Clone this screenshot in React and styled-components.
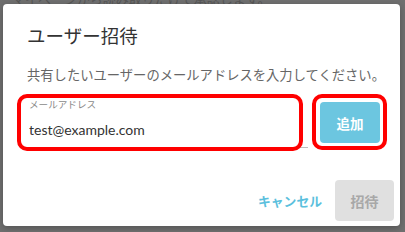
import React from "react";
import styled, { createGlobalStyle } from "styled-components";

const Global = createGlobalStyle`
  html, body { margin: 0; padding: 0; }
  body {
    width: 405px;
    height: 232px;
    overflow: hidden;
    background: #6f6f6f;
    font-family: "Lato", "Noto Sans CJK JP", sans-serif;
  }
`;

const Page = styled.div`
  position: relative;
  width: 405px;
  height: 232px;
  background: #6f6f6f;
  overflow: hidden;
`;

const BackText = styled.div`
  margin: -9px 0 0 12px;
  font-size: 13px;
  line-height: 16px;
  color: #565656;
  white-space: nowrap;
`;

const Dialog = styled.div`
  position: absolute;
  left: 3px;
  top: 4px;
  width: 397px;
  height: 222px;
  box-sizing: border-box;
  background: #fff;
  border-radius: 4px;
  box-shadow: 0 2px 6px rgba(0, 0, 0, 0.25);
  display: flex;
  flex-direction: column;
  padding: 20px 6px 5px 24px;
`;

const Title = styled.h2`
  margin: 0;
  font-size: 18.5px;
  line-height: 24px;
  font-weight: 400;
  color: #333;
`;

const Message = styled.p`
  margin: 17px 0 0;
  font-size: 13.3px;
  line-height: 20px;
  color: #666;
  white-space: nowrap;
`;

const FieldRow = styled.div`
  display: flex;
  align-items: flex-start;
  gap: 12px;
  margin-top: 11px;
  padding-right: 14px;
`;

const Annotated = styled.div`
  position: relative;
  display: flex;
  flex: ${(p) => (p.$grow ? 1 : "none")};
  &::after {
    content: "";
    position: absolute;
    left: ${(p) => p.$l}px;
    right: ${(p) => p.$r}px;
    top: ${(p) => p.$t}px;
    bottom: ${(p) => p.$b}px;
    border: 4px solid #ff0000;
    border-radius: 10px;
    pointer-events: none;
  }
`;

const Field = styled.label`
  flex: 1;
  display: flex;
  flex-direction: column;
  padding-left: 2px;
  border-bottom: 1px solid #bdbdbd;
`;

const FieldLabel = styled.span`
  font-size: 9.6px;
  line-height: 14px;
  color: #8a8a8a;
  margin-top: 2px;
`;

const Input = styled.input`
  border: none;
  outline: none;
  padding: 0;
  margin: 8px 0 7px;
  font-family: "Lato", "Noto Sans CJK JP", sans-serif;
  font-size: 14px;
  line-height: 20px;
  height: 20px;
  color: #333;
  background: transparent;
`;

const AddButton = styled.button`
  width: 60px;
  height: 41px;
  margin-top: 6px;
  border: none;
  border-radius: 4px;
  background: #6cc6e0;
  color: #fff;
  font-family: "Lato", "Noto Sans CJK JP", sans-serif;
  font-weight: 700;
  font-size: 13.5px;
`;

const Footer = styled.div`
  margin-top: auto;
  display: flex;
  justify-content: flex-end;
  align-items: center;
  gap: 5px;
`;

const TextButton = styled.button`
  border: none;
  background: transparent;
  padding: 0 8px;
  height: 41px;
  color: #5bbfdd;
  font-family: "Lato", "Noto Sans CJK JP", sans-serif;
  font-weight: 700;
  font-size: 12.8px;
`;

const DisabledButton = styled.button`
  width: 59px;
  height: 41px;
  border: none;
  border-radius: 4px;
  background: #e0e0e0;
  color: #a8a8a8;
  font-family: "Lato", "Noto Sans CJK JP", sans-serif;
  font-weight: 700;
  font-size: 14px;
`;

export default function App() {
  return (
    <>
      <Global />
      <Page>
        <BackText>マイページから読み取りだけで承認します。</BackText>
        <Dialog>
          <Title>ユーザー招待</Title>
          <Message>共有したいユーザーのメールアドレスを入力してください。</Message>
          <FieldRow>
            <Annotated $grow $l={-10} $r={5} $t={-2} $b={-3}>
              <Field>
                <FieldLabel>メールアドレス</FieldLabel>
                <Input defaultValue="test@example.com" />
              </Field>
            </Annotated>
            <Annotated $l={-8} $r={-7} $t={-2} $b={-7}>
              <AddButton>追加</AddButton>
            </Annotated>
          </FieldRow>
          <Footer>
            <TextButton>キャンセル</TextButton>
            <DisabledButton disabled>招待</DisabledButton>
          </Footer>
        </Dialog>
      </Page>
    </>
  );
}
